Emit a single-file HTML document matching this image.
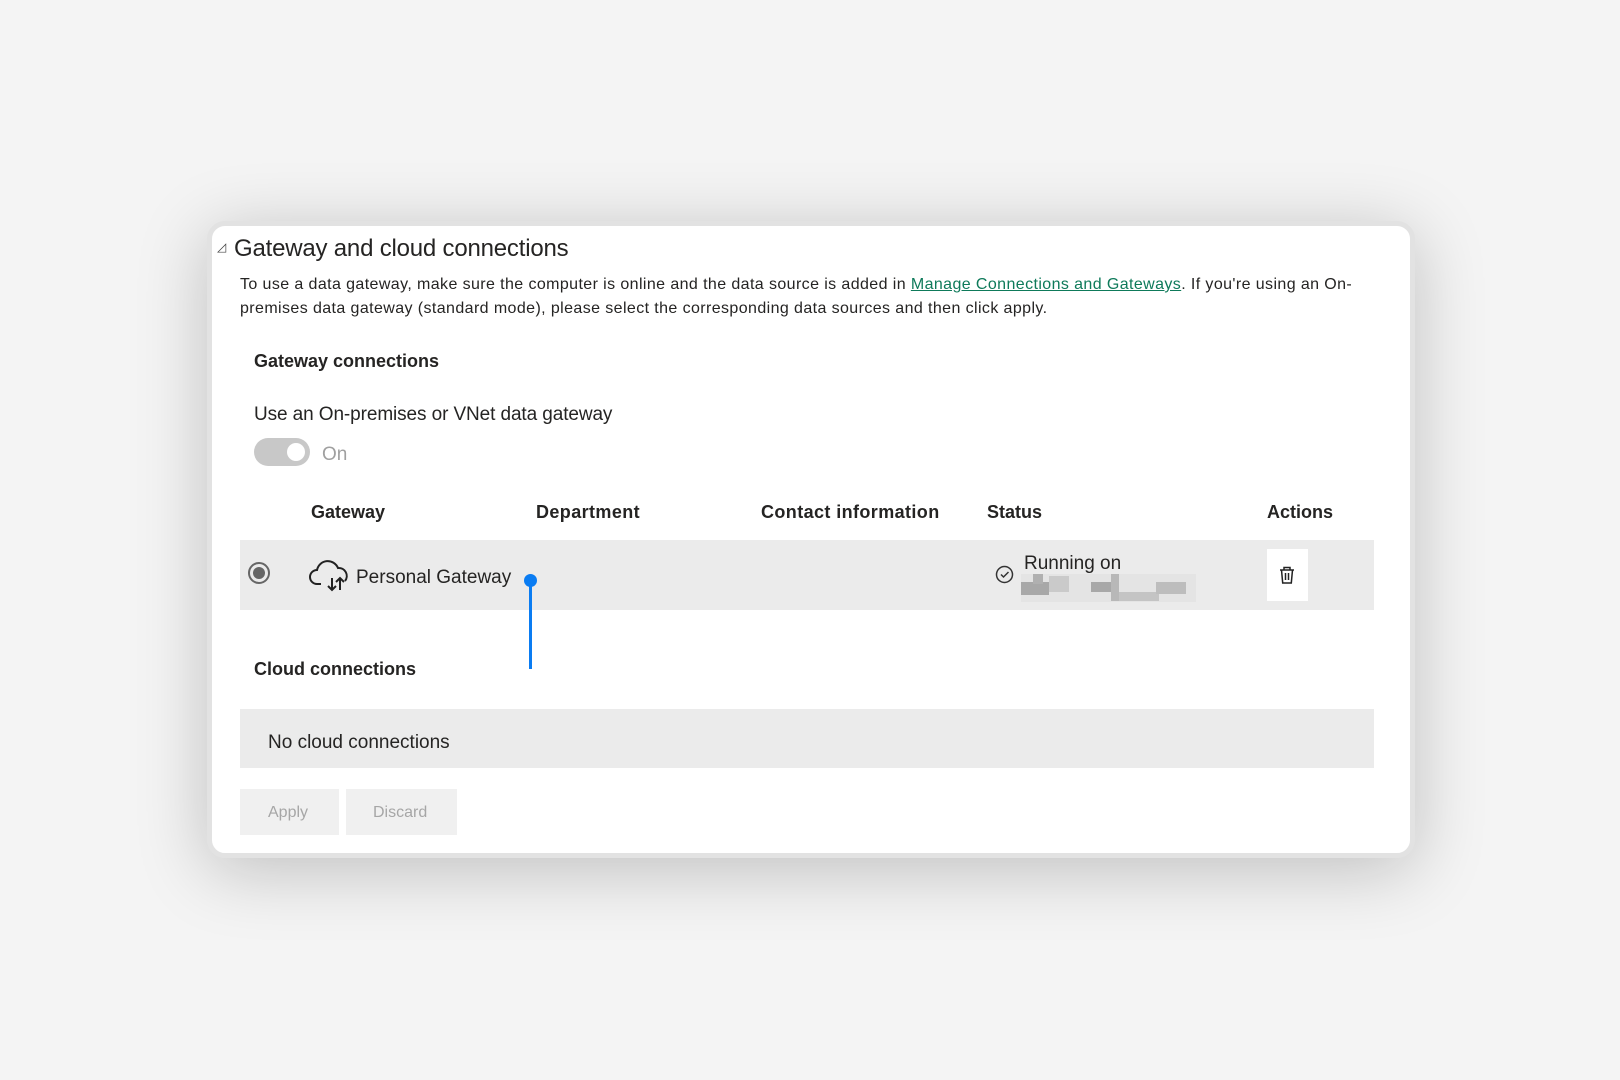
<!DOCTYPE html>
<html><head><meta charset="utf-8"><style>
*{margin:0;padding:0;box-sizing:border-box}
body{width:1620px;height:1080px;background:#f4f4f4;font-family:"Liberation Sans",sans-serif;color:#252423;position:relative;overflow:hidden}
.card{position:absolute;left:207px;top:221px;width:1208px;height:637px;background:#fff;border:5px solid #e2e2e2;border-radius:18px;box-shadow:0 12px 70px rgba(0,0,0,0.22)}
.a{position:absolute;white-space:nowrap}
.b{font-weight:bold}
</style></head><body>
<div class="card"></div>
<div class="a" style="left:217px;top:240px;font-size:12px;color:#444">◿</div>
<div class="a" style="left:234px;top:235px;font-size:24px;letter-spacing:-0.2px">Gateway and cloud connections</div>
<div class="a" style="left:240px;top:273px;font-size:16px;line-height:24px;letter-spacing:0.4px">To use a data gateway, make sure the computer is online and the data source is added in <span style="color:#0e7a5a;text-decoration:underline">Manage Connections and Gateways</span>. If you're using an On-<br>premises data gateway (standard mode), please select the corresponding data sources and then click apply.</div>
<div class="a b" style="left:254px;top:351px;font-size:18px">Gateway connections</div>
<div class="a" style="left:254px;top:404px;font-size:19px;letter-spacing:-0.1px">Use an On-premises or VNet data gateway</div>
<div class="a" style="left:254px;top:438px;width:56px;height:28px;border-radius:14px;background:#c8c8c8"></div>
<div class="a" style="left:287px;top:443px;width:18px;height:18px;border-radius:9px;background:#fff"></div>
<div class="a" style="left:322px;top:444px;font-size:19px;color:#a0a0a0">On</div>
<div class="a b" style="left:311px;top:502px;font-size:18px">Gateway</div>
<div class="a b" style="left:536px;top:502px;font-size:18px;letter-spacing:0.4px">Department</div>
<div class="a b" style="left:761px;top:502px;font-size:18px;letter-spacing:0.4px">Contact information</div>
<div class="a b" style="left:987px;top:502px;font-size:18px">Status</div>
<div class="a b" style="left:1267px;top:502px;font-size:18px">Actions</div>
<div class="a" style="left:240px;top:540px;width:1134px;height:70px;background:#ebebeb"></div>
<div class="a" style="left:248px;top:562px;width:22px;height:22px;border-radius:11px;border:2px solid #666"></div>
<div class="a" style="left:253px;top:567px;width:12px;height:12px;border-radius:6px;background:#666"></div>
<svg class="a" style="left:309px;top:556px" width="42" height="38" viewBox="0 0 42 38" fill="none" stroke="#222" stroke-width="2"><path d="M12 28H8a7 7 0 0 1 0-14 11 11 0 0 1 21-2 8 8 0 0 1 7 13"/><path d="M23 22v12M19 30l4 4 4-4M31 34V22M27 26l4-4 4 4"/></svg>
<div class="a" style="left:356px;top:567px;font-size:19px">Personal Gateway</div>
<div class="a" style="left:524px;top:574px;width:13px;height:13px;border-radius:7px;background:#0a7cf2"></div>
<div class="a" style="left:529px;top:580px;width:3px;height:89px;background:#0a7cf2"></div>
<svg class="a" style="left:995px;top:565px" width="19" height="19" viewBox="0 0 19 19" fill="none" stroke="#333" stroke-width="1.5"><circle cx="9.5" cy="9.5" r="8"/><path d="M6 9.5l2.5 2.5 5-5"/></svg>
<div class="a" style="left:1024px;top:553px;font-size:19px">Running on</div>
<svg class="a" style="left:1021px;top:574px" width="175" height="28"><rect x="0" y="0" width="175" height="28" fill="#e4e4e4"/><rect x="0" y="8" width="28" height="13" fill="#a8a8a8"/><rect x="12" y="0" width="10" height="10" fill="#b0b0b0"/><rect x="28" y="2" width="20" height="16" fill="#cacaca"/><rect x="70" y="8" width="20" height="10" fill="#a8a8a8"/><rect x="90" y="0" width="8" height="27" fill="#b8b8b8"/><rect x="98" y="18" width="40" height="9" fill="#c4c4c4"/><rect x="135" y="8" width="30" height="12" fill="#bdbdbd"/></svg>
<div class="a" style="left:1267px;top:549px;width:41px;height:52px;background:#fff"></div>
<svg class="a" style="left:1277px;top:564px" width="20" height="22" viewBox="0 0 20 22" fill="none" stroke="#222" stroke-width="1.5"><path d="M3 6h14M7 6V3.5h6V6M4.5 6l1.2 13h8.6l1.2-13M8.5 9v7M11.5 9v7"/></svg>
<div class="a b" style="left:254px;top:659px;font-size:18px">Cloud connections</div>
<div class="a" style="left:240px;top:709px;width:1134px;height:59px;background:#ebebeb"></div>
<div class="a" style="left:268px;top:732px;font-size:19px">No cloud connections</div>
<div class="a" style="left:240px;top:789px;width:99px;height:46px;background:#f0f0f0"></div>
<div class="a" style="left:268px;top:804px;font-size:16px;color:#a6a6a6">Apply</div>
<div class="a" style="left:346px;top:789px;width:111px;height:46px;background:#f0f0f0"></div>
<div class="a" style="left:373px;top:804px;font-size:16px;color:#a6a6a6">Discard</div>
</body></html>
